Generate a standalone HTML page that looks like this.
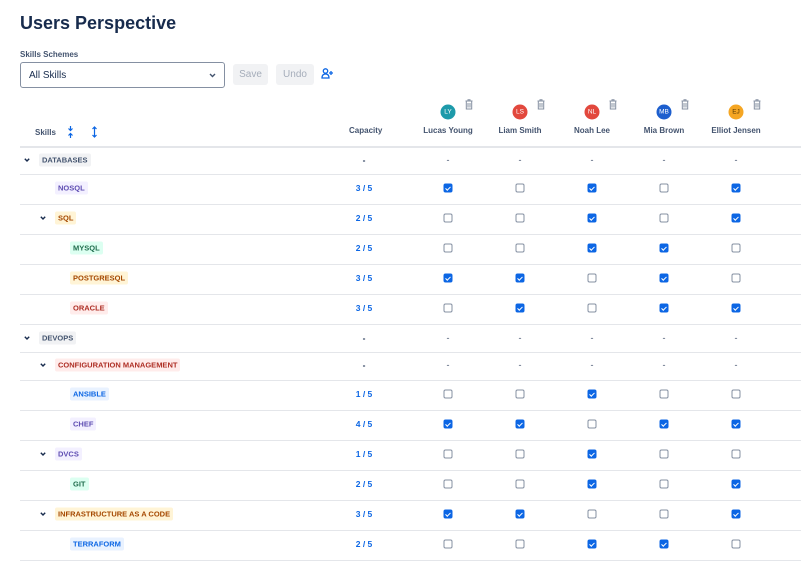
<!DOCTYPE html>
<html><head><meta charset="utf-8"><style>
*{box-sizing:border-box;margin:0;padding:0}
body{width:801px;height:573px;background:#fff;font-family:"Liberation Sans",sans-serif;color:#172b4d;position:relative;overflow:hidden}
.a{position:absolute}
h1{position:absolute;left:20px;top:13px;font-size:18px;font-weight:bold;color:#172b4d}
.lbl{left:20px;top:50px;font-size:8px;font-weight:bold;color:#44546f}
.sel{left:20px;top:62px;width:205px;height:26px;border:1px solid #8590a2;border-radius:3px;font-size:10px;padding:7px 8px;color:#172b4d}
.btn{top:64px;height:21px;background:#f1f2f4;border-radius:3px;font-size:10px;color:#a5adba;text-align:center;line-height:21px}
.hd{font-size:8px;font-weight:bold;color:#44546f}
.line{left:20px;width:781px;height:1px;background:#e4e6ea}
.tag{position:absolute;font-size:7.5px;font-weight:bold;padding:0 3px;height:13px;line-height:13px;border-radius:2px;transform:translateY(-50%)}
.g{background:#f1f2f4;color:#44546f}.p{background:#f3f0ff;color:#5e4db2}.y{background:#fff4d6;color:#a54800}.gr{background:#dcfff1;color:#216e4e}.r{background:#ffeceb;color:#ae2e24}.b{background:#e9f2ff;color:#0c66e4}
.cap{position:absolute;left:364px;transform:translate(-50%,-50%);font-size:8.5px;font-weight:bold;color:#0c66e4}
.dash{position:absolute;transform:translate(-50%,-50%);font-size:9px;color:#44546f}
.cb{position:absolute;width:9px;height:9px;border:1px solid #8590a2;border-radius:2px;transform:translate(-50%,-50%);background:#fff}
.cb.on{background:#0c66e4;border-color:#0c66e4}
.cb.on:after{content:"";position:absolute;left:2px;top:0.5px;width:2px;height:4px;border:solid #fff;border-width:0 1.3px 1.3px 0;transform:rotate(45deg)}
.av{position:absolute;width:15px;height:15px;border-radius:50%;color:#fff;font-size:6.5px;text-align:center;line-height:15px;transform:translate(-50%,-50%)}
.nm{position:absolute;transform:translateX(-50%);font-size:8px;font-weight:bold;color:#44546f;white-space:nowrap;top:126px}
</style></head><body>
<h1>Users Perspective</h1>
<div class="a lbl">Skills Schemes</div>
<div class="a sel">All Skills<svg class="a" style="right:8px;top:10px" width="7" height="5" viewBox="0 0 7 5"><path d="M1 1l2.5 2.5L6 1" stroke="#44546f" stroke-width="1.4" fill="none"/></svg></div>
<div class="a btn" style="left:233px;width:35px">Save</div>
<div class="a btn" style="left:276px;width:38px">Undo</div>
<svg class="a" style="left:321px;top:68px" width="13" height="11" viewBox="0 0 13 11"><circle cx="4.5" cy="3" r="2.2" stroke="#0c66e4" stroke-width="1.3" fill="none"/><path d="M1 10c0-3 1.5-4 3.5-4s3.5 1 3.5 4z" stroke="#0c66e4" stroke-width="1.3" fill="none"/><path d="M10 3v4M8 5h4" stroke="#0c66e4" stroke-width="1.3"/></svg>

<div class="a hd" style="left:35px;top:128px">Skills</div>
<svg class="a" style="left:67px;top:126px" width="7" height="12" viewBox="0 0 7 12"><path d="M3.5 0v4M1.5 2.5l2 2 2-2M3.5 12V8M1.5 9.5l2-2 2 2" stroke="#0c66e4" stroke-width="1.2" fill="none"/></svg>
<svg class="a" style="left:91px;top:126px" width="7" height="12" viewBox="0 0 7 12"><path d="M3.5 1v10M1.5 3l2-2 2 2M1.5 9l2 2 2-2" stroke="#0c66e4" stroke-width="1.2" fill="none"/></svg>
<div class="a hd" style="left:349px;top:126px">Capacity</div>

<div class="av" style="left:448px;top:112px;background:#1d9aaa">LY</div>
<div class="av" style="left:520px;top:112px;background:#e2483d">LS</div>
<div class="av" style="left:592px;top:112px;background:#e2483d">NL</div>
<div class="av" style="left:664px;top:112px;background:#1d5fce">MB</div>
<div class="av" style="left:736px;top:112px;background:#f5a623;color:#5a3a00">EJ</div>
<svg width="0" height="0" style="position:absolute"><defs><symbol id="tr" viewBox="0 0 8 11"><path d="M0.5 2h7M3 2V0.8h2V2M1.3 2.5v7.5h5.4V2.5M3 4v4.5M5 4v4.5" stroke="#8590a2" stroke-width="1" fill="none"/></symbol></defs></svg>
<svg class="a" style="left:465px;top:99px" width="8" height="11"><use href="#tr"/></svg>
<svg class="a" style="left:537px;top:99px" width="8" height="11"><use href="#tr"/></svg>
<svg class="a" style="left:609px;top:99px" width="8" height="11"><use href="#tr"/></svg>
<svg class="a" style="left:681px;top:99px" width="8" height="11"><use href="#tr"/></svg>
<svg class="a" style="left:753px;top:99px" width="8" height="11"><use href="#tr"/></svg>
<div class="nm" style="left:448px">Lucas Young</div>
<div class="nm" style="left:520px">Liam Smith</div>
<div class="nm" style="left:592px">Noah Lee</div>
<div class="nm" style="left:664px">Mia Brown</div>
<div class="nm" style="left:736px">Elliot Jensen</div>

<div class="a line" style="top:146px;height:2px"></div>
<div class="a line" style="top:174px"></div>
<div class="a line" style="top:204px"></div>
<div class="a line" style="top:234px"></div>
<div class="a line" style="top:264px"></div>
<div class="a line" style="top:294px"></div>
<div class="a line" style="top:324px"></div>
<div class="a line" style="top:352px"></div>
<div class="a line" style="top:380px"></div>
<div class="a line" style="top:410px"></div>
<div class="a line" style="top:440px"></div>
<div class="a line" style="top:470px"></div>
<div class="a line" style="top:500px"></div>
<div class="a line" style="top:530px"></div>
<div class="a line" style="top:560px"></div>

<svg width="0" height="0" style="position:absolute"><defs><symbol id="ch" viewBox="0 0 6 4"><path d="M0.8 0.8l2.2 2.2 2.2-2.2" stroke="#172b4d" stroke-width="1.4" fill="none"/></symbol></defs></svg>
<svg class="a" style="left:24px;top:158px" width="6" height="4"><use href="#ch"/></svg>
<svg class="a" style="left:40px;top:216px" width="6" height="4"><use href="#ch"/></svg>
<svg class="a" style="left:24px;top:336px" width="6" height="4"><use href="#ch"/></svg>
<svg class="a" style="left:40px;top:363px" width="6" height="4"><use href="#ch"/></svg>
<svg class="a" style="left:40px;top:452px" width="6" height="4"><use href="#ch"/></svg>
<svg class="a" style="left:40px;top:512px" width="6" height="4"><use href="#ch"/></svg>

<div class="tag g" style="left:39px;top:160px">DATABASES</div>
<div class="tag p" style="left:55px;top:188px">NOSQL</div>
<div class="tag y" style="left:55px;top:218px">SQL</div>
<div class="tag gr" style="left:70px;top:248px">MYSQL</div>
<div class="tag y" style="left:70px;top:278px">POSTGRESQL</div>
<div class="tag r" style="left:70px;top:308px">ORACLE</div>
<div class="tag g" style="left:39px;top:338px">DEVOPS</div>
<div class="tag r" style="left:55px;top:365px">CONFIGURATION MANAGEMENT</div>
<div class="tag b" style="left:70px;top:394px">ANSIBLE</div>
<div class="tag p" style="left:70px;top:424px">CHEF</div>
<div class="tag p" style="left:55px;top:454px">DVCS</div>
<div class="tag gr" style="left:70px;top:484px">GIT</div>
<div class="tag y" style="left:55px;top:514px">INFRASTRUCTURE AS A CODE</div>
<div class="tag b" style="left:70px;top:544px">TERRAFORM</div>

<div class="cap" style="top:160px;color:#172b4d">-</div>
<div class="cap" style="top:188px">3 / 5</div>
<div class="cap" style="top:218px">2 / 5</div>
<div class="cap" style="top:248px">2 / 5</div>
<div class="cap" style="top:278px">3 / 5</div>
<div class="cap" style="top:308px">3 / 5</div>
<div class="cap" style="top:338px;color:#172b4d">-</div>
<div class="cap" style="top:365px;color:#172b4d">-</div>
<div class="cap" style="top:394px">1 / 5</div>
<div class="cap" style="top:424px">4 / 5</div>
<div class="cap" style="top:454px">1 / 5</div>
<div class="cap" style="top:484px">2 / 5</div>
<div class="cap" style="top:514px">3 / 5</div>
<div class="cap" style="top:544px">2 / 5</div>

<div class="dash" style="left:448px;top:160px">-</div><div class="dash" style="left:520px;top:160px">-</div><div class="dash" style="left:592px;top:160px">-</div><div class="dash" style="left:664px;top:160px">-</div><div class="dash" style="left:736px;top:160px">-</div>
<div class="dash" style="left:448px;top:338px">-</div><div class="dash" style="left:520px;top:338px">-</div><div class="dash" style="left:592px;top:338px">-</div><div class="dash" style="left:664px;top:338px">-</div><div class="dash" style="left:736px;top:338px">-</div>
<div class="dash" style="left:448px;top:365px">-</div><div class="dash" style="left:520px;top:365px">-</div><div class="dash" style="left:592px;top:365px">-</div><div class="dash" style="left:664px;top:365px">-</div><div class="dash" style="left:736px;top:365px">-</div>

<div class="cb on" style="left:448px;top:188px"></div><div class="cb" style="left:520px;top:188px"></div><div class="cb on" style="left:592px;top:188px"></div><div class="cb" style="left:664px;top:188px"></div><div class="cb on" style="left:736px;top:188px"></div>
<div class="cb" style="left:448px;top:218px"></div><div class="cb" style="left:520px;top:218px"></div><div class="cb on" style="left:592px;top:218px"></div><div class="cb" style="left:664px;top:218px"></div><div class="cb on" style="left:736px;top:218px"></div>
<div class="cb" style="left:448px;top:248px"></div><div class="cb" style="left:520px;top:248px"></div><div class="cb on" style="left:592px;top:248px"></div><div class="cb on" style="left:664px;top:248px"></div><div class="cb" style="left:736px;top:248px"></div>
<div class="cb on" style="left:448px;top:278px"></div><div class="cb on" style="left:520px;top:278px"></div><div class="cb" style="left:592px;top:278px"></div><div class="cb on" style="left:664px;top:278px"></div><div class="cb" style="left:736px;top:278px"></div>
<div class="cb" style="left:448px;top:308px"></div><div class="cb on" style="left:520px;top:308px"></div><div class="cb" style="left:592px;top:308px"></div><div class="cb on" style="left:664px;top:308px"></div><div class="cb on" style="left:736px;top:308px"></div>
<div class="cb" style="left:448px;top:394px"></div><div class="cb" style="left:520px;top:394px"></div><div class="cb on" style="left:592px;top:394px"></div><div class="cb" style="left:664px;top:394px"></div><div class="cb" style="left:736px;top:394px"></div>
<div class="cb on" style="left:448px;top:424px"></div><div class="cb on" style="left:520px;top:424px"></div><div class="cb" style="left:592px;top:424px"></div><div class="cb on" style="left:664px;top:424px"></div><div class="cb on" style="left:736px;top:424px"></div>
<div class="cb" style="left:448px;top:454px"></div><div class="cb" style="left:520px;top:454px"></div><div class="cb on" style="left:592px;top:454px"></div><div class="cb" style="left:664px;top:454px"></div><div class="cb" style="left:736px;top:454px"></div>
<div class="cb" style="left:448px;top:484px"></div><div class="cb" style="left:520px;top:484px"></div><div class="cb on" style="left:592px;top:484px"></div><div class="cb" style="left:664px;top:484px"></div><div class="cb on" style="left:736px;top:484px"></div>
<div class="cb on" style="left:448px;top:514px"></div><div class="cb on" style="left:520px;top:514px"></div><div class="cb" style="left:592px;top:514px"></div><div class="cb" style="left:664px;top:514px"></div><div class="cb on" style="left:736px;top:514px"></div>
<div class="cb" style="left:448px;top:544px"></div><div class="cb" style="left:520px;top:544px"></div><div class="cb on" style="left:592px;top:544px"></div><div class="cb on" style="left:664px;top:544px"></div><div class="cb" style="left:736px;top:544px"></div>
</body></html>
